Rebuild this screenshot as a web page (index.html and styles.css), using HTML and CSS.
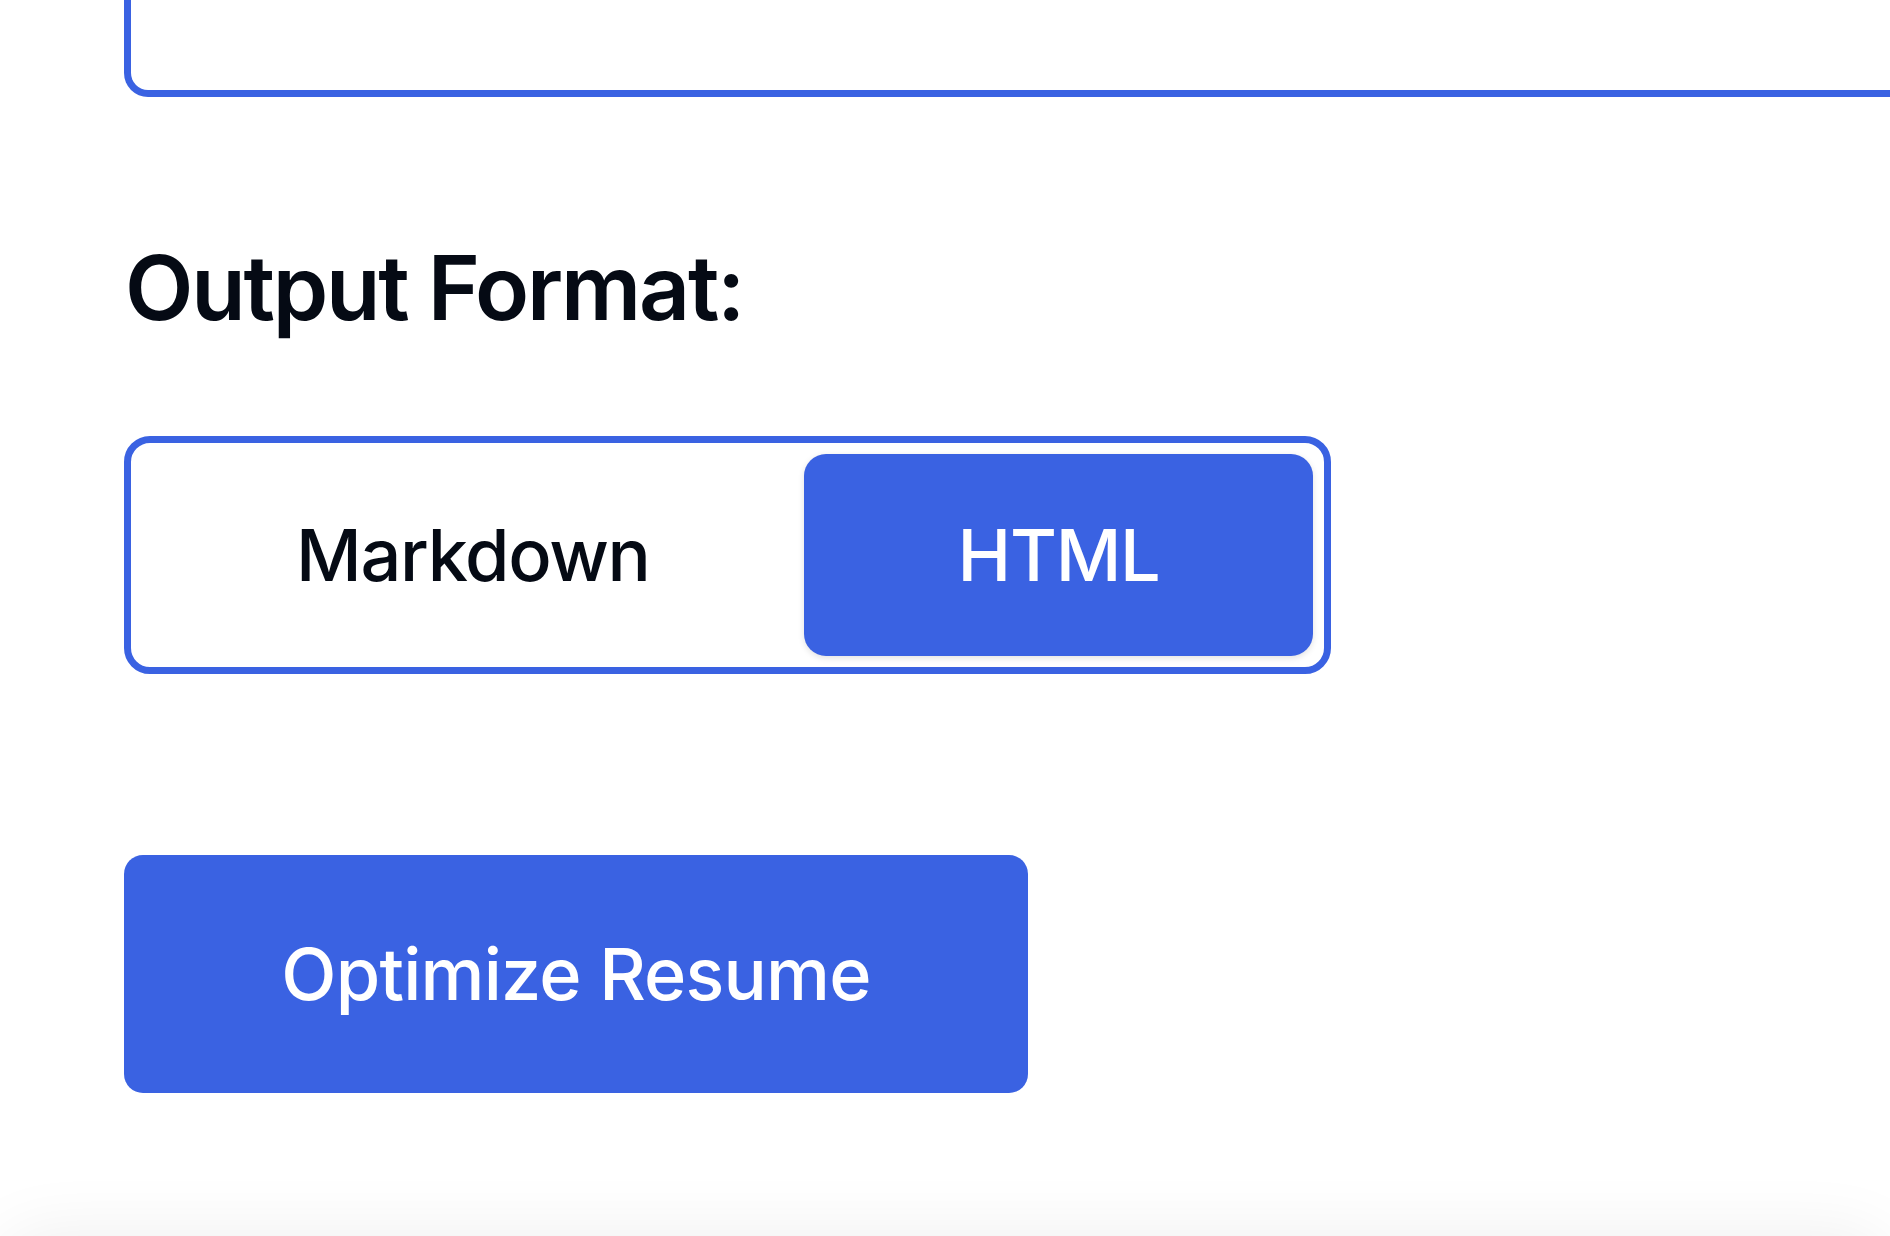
FILE: index.html
```html
<!DOCTYPE html>
<html lang="en">

<head>
    <meta charset="UTF-8">
    <meta name="viewport" content="width=device-width, initial-scale=1.0">
    <title>Resume Optimizer</title>
    <link rel="stylesheet" href="styles.css">
</head>

<body>
    <div class="page">
        <div class="editor"></div>

        <h2 class="label">Output Format:</h2>

        <div class="toggle">
            <button class="segment">Markdown</button>
            <button class="segment active">HTML</button>
        </div>

        <button class="optimize">Optimize Resume</button>
    </div>

    <div class="results"></div>
</body>

</html>
```

FILE: styles.css
```css
html,
body {
    overflow: hidden;
}

body {
    margin: 0;
    background: #ffffff;
    font-family: Inter, "Noto Sans", "Liberation Sans", sans-serif;
    color: #050a14;
}

.page {
    padding-left: 124px;
    display: flex;
    flex-direction: column;
    align-items: flex-start;
}

.editor {
    width: 2000px;
    height: 90px;
    border: 7px solid #3a62e2;
    border-top: none;
    border-radius: 0 0 0 24px;
    box-sizing: content-box;
}

.label {
    margin: 138px 0 0 1px;
    font-size: 89px;
    font-weight: 600;
    line-height: 1.2;
    letter-spacing: -2.2px;
}

.toggle {
    margin-top: 94px;
    display: inline-flex;
    padding: 11px;
    border: 7px solid #3a62e2;
    border-radius: 26px;
}

.segment {
    height: 202px;
    padding: 0 154px;
    border: none;
    border-radius: 22px;
    background: transparent;
    font-family: inherit;
    font-size: 72px;
    font-weight: 500;
    letter-spacing: -1.3px;
    color: #050a14;
    cursor: pointer;
}

.segment.active {
    background: #3a62e2;
    color: #ffffff;
    box-shadow: 0 2px 6px rgba(0, 0, 0, 0.12);
}

.optimize {
    margin-top: 181px;
    width: 904px;
    height: 238px;
    border: none;
    border-radius: 19px;
    background: #3a62e2;
    color: #ffffff;
    font-family: inherit;
    font-size: 72px;
    font-weight: 500;
    letter-spacing: -0.8px;
    cursor: pointer;
}

.results {
    margin-top: 150px;
    height: 400px;
    border-radius: 40px;
    background: #ffffff;
    box-shadow: 0 -8px 70px rgba(0, 0, 0, 0.07);
}
```
